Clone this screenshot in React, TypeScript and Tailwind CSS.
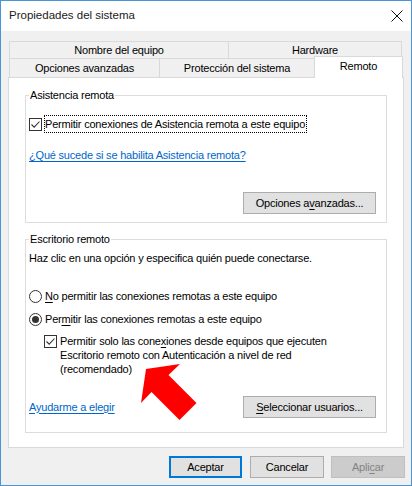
import React from "react";

function CheckBox() {
  return (
    <span className="w-[13px] h-[13px] border border-[#333333] bg-white flex items-center justify-center shrink-0">
      <svg width="11" height="11" viewBox="0 0 11 11">
        <path d="M1.5 5.5 L4.2 8.2 L9.5 2.5" fill="none" stroke="#333333" strokeWidth="1.1" />
      </svg>
    </span>
  );
}

function Radio({ on }: { on?: boolean }) {
  return (
    <span className="w-[13px] h-[13px] rounded-full border border-[#333333] bg-white flex items-center justify-center shrink-0">
      {on ? <span className="w-[7px] h-[7px] rounded-full bg-[#333333]" /> : null}
    </span>
  );
}

export default function App() {
  return (
    <div className="relative w-[412px] h-[486px] border border-[#4a94d8] bg-[#f0f0f0] flex flex-col font-['Liberation_Sans',Arial,sans-serif] text-[11px] text-black tracking-[-0.2px]">
      {/* title bar */}
      <div className="h-[30px] bg-white flex items-center justify-between pl-[8px] pr-[8px] shrink-0">
        <span className="text-[11.5px] text-[#1a1a1a] tracking-normal">Propiedades del sistema</span>
        <svg width="12" height="12" viewBox="0 0 12 12">
          <path d="M0.5 0.5 L11.5 11.5 M11.5 0.5 L0.5 11.5" stroke="#111111" strokeWidth="1" />
        </svg>
      </div>

      {/* body */}
      <div className="flex-1 px-[7px] pt-[10px] flex flex-col">
        {/* tabs */}
        <div className="flex flex-col pl-[1px]">
          <div className="flex h-[17px]">
            <div className="w-[220px] border border-b-0 border-[#d9d9d9] bg-[#f0f0f0] flex items-center justify-center leading-none">
              Nombre del equipo
            </div>
            <div className="w-[174px] -ml-px border border-b-0 border-[#d9d9d9] bg-[#f0f0f0] flex items-center justify-center leading-none">
              Hardware
            </div>
          </div>
          <div className="flex h-[19px] items-end">
            <div className="w-[151px] h-[19px] border border-b-0 border-[#d9d9d9] bg-[#f0f0f0] flex items-center justify-center leading-none">
              Opciones avanzadas
            </div>
            <div className="w-[156px] h-[19px] -ml-px border border-b-0 border-[#d9d9d9] bg-[#f0f0f0] flex items-center justify-center leading-none">
              Protección del sistema
            </div>
            <div className="relative z-10 w-[89px] h-[22px] -ml-px -mb-px border border-b-0 border-[#d9d9d9] bg-white flex items-center justify-center pb-[3px] leading-none">
              Remoto
            </div>
          </div>
        </div>

        {/* panel */}
        <div className="h-[371px] border border-[#d9d9d9] bg-white px-[16px] pt-[17px] flex flex-col shrink-0">
          {/* Asistencia remota */}
          <div className="relative h-[128px] border border-[#dcdcdc] pl-[3px] pr-[10px] flex flex-col">
            <span className="absolute left-[3px] -top-[8px] bg-white px-[1px] leading-[14px]">Asistencia remota</span>
            <div className="mt-[19px] h-[18px] flex items-center">
              <CheckBox />
              <span className="ml-[2px] h-[18px] border border-dotted border-black pr-[1px] flex items-center leading-none">
                <span>
                  <u className="no-underline underline-offset-2 [text-decoration-line:underline]">P</u>ermitir conexiones de Asistencia remota a este equipo
                </span>
              </span>
            </div>
            <div className="mt-[15px] leading-[15px]">
              <span className="text-[#0066cc] underline underline-offset-2">¿Qué sucede si se habilita Asistencia remota?</span>
            </div>
            <div className="mt-[29px] flex justify-end">
              <div className="w-[133px] h-[22px] bg-[#e1e1e1] border border-[#adadad] flex items-center justify-center leading-none">
                <span>
                  Opciones a<u className="underline-offset-2">v</u>anzadas...
                </span>
              </div>
            </div>
          </div>

          {/* Escritorio remoto */}
          <div className="relative mt-[16px] h-[194px] border border-[#dcdcdc] pl-[3px] pr-[10px] flex flex-col">
            <span className="absolute left-[3px] -top-[8px] bg-white px-[1px] leading-[14px]">Escritorio remoto</span>
            <div className="mt-[11px] leading-[15px]">Haz clic en una opción y especifica quién puede conectarse.</div>
            <div className="mt-[22px] h-[16px] flex items-center gap-[3px]">
              <Radio />
              <span className="leading-none">
                <u className="underline-offset-2">N</u>o permitir las conexiones remotas a este equipo
              </span>
            </div>
            <div className="mt-[7px] h-[16px] flex items-center gap-[3px]">
              <Radio on />
              <span className="leading-none">
                Per<u className="underline-offset-2">m</u>itir las conexiones remotas a este equipo
              </span>
            </div>
            <div className="mt-[7px] pl-[15px] flex items-start gap-[3px]">
              <span className="mt-[1px]">
                <CheckBox />
              </span>
              <span className="leading-[14px]">
                Permitir solo las cone<u className="underline-offset-2">x</u>iones desde equipos que ejecuten
                <br />
                Escritorio remoto con Autenticación a nivel de red
                <br />
                (recomendado)
              </span>
            </div>
            <div className="mt-[20px] h-[22px] flex items-center justify-between">
              <span className="text-[#0066cc] underline underline-offset-2 leading-[15px]">Ayudarme a elegir</span>
              <div className="w-[133px] h-[22px] bg-[#e1e1e1] border border-[#adadad] flex items-center justify-center leading-none">
                <span>
                  <u className="underline-offset-2">S</u>eleccionar usuarios...
                </span>
              </div>
            </div>
          </div>
        </div>

        {/* dialog buttons */}
        <div className="mt-[8px] flex justify-end mr-[-1px]">
          <div className="w-[73px] h-[22px] bg-[#e1e1e1] border-2 border-[#0078d7] flex items-center justify-center leading-none">
            Aceptar
          </div>
          <div className="ml-[8px] w-[74px] h-[22px] bg-[#e1e1e1] border border-[#adadad] flex items-center justify-center leading-none">
            Cancelar
          </div>
          <div className="ml-[7px] w-[74px] h-[22px] bg-[#cccccc] border border-[#bfbfbf] text-[#838383] flex items-center justify-center leading-none">
            <span>
              Apli<u className="underline-offset-2">c</u>ar
            </span>
          </div>
        </div>
      </div>

      {/* red annotation arrow */}
      <svg className="absolute -left-px -top-px pointer-events-none" width="412" height="486" viewBox="0 0 412 486">
        <polygon
          points="146,369 180,364 168.5,375 196.5,403 179.5,420 151.5,392 141,403"
          fill="#ff0000"
        />
      </svg>
    </div>
  );
}
